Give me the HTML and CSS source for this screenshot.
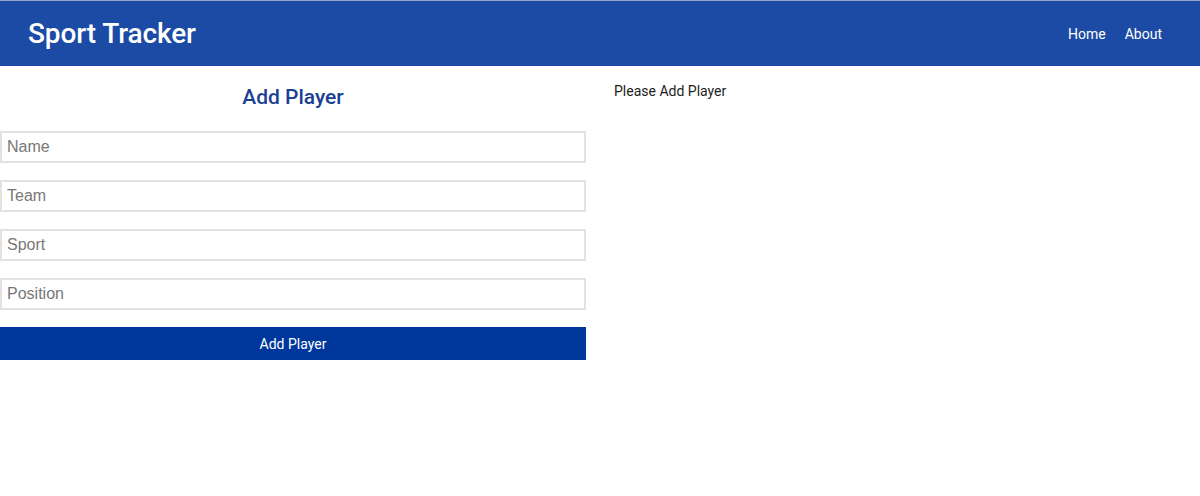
FILE: index.html
```html
<!DOCTYPE html>
<html lang="en">
<head>
<meta charset="utf-8">
<title>Sport Tracker</title>
<link rel="stylesheet" href="styles.css">
</head>
<body>
<header class="navbar">
  <h1 class="brand">Sport Tracker</h1>
  <nav class="nav">
    <a class="nav-link" href="#">Home</a>
    <a class="nav-link" href="#">About</a>
  </nav>
</header>
<main class="content">
  <section class="form-col">
    <h2 class="form-title">Add Player</h2>
    <form class="player-form">
      <input class="field" type="text" placeholder="Name">
      <input class="field" type="text" placeholder="Team">
      <input class="field" type="text" placeholder="Sport">
      <input class="field" type="text" placeholder="Position">
      <button class="submit" type="button">Add Player</button>
    </form>
  </section>
  <section class="list-col">
    <p class="empty">Please Add Player</p>
  </section>
</main>
</body>
</html>
```
FILE: styles.css
```css
* { box-sizing: border-box; }
html, body { margin: 0; padding: 0; background: #fff; }
body { font-family: Roboto, "Liberation Sans", sans-serif; color: #222; }

.navbar {
  display: flex;
  align-items: center;
  justify-content: space-between;
  height: 66px;
  padding: 0 38px 0 28px;
  background: #1c4ba5;
  border-top: 1px solid #8fa3c9;
}
.brand {
  margin: 0;
  font-size: 28px;
  font-weight: 500;
  color: #fff;
  letter-spacing: -0.1px;
}
.nav { display: flex; gap: 19px; }
.nav-link {
  color: #fff;
  text-decoration: none;
  font-size: 14px;
  font-weight: 400;
}

.content {
  display: grid;
  grid-template-columns: 586px 1fr;
}
.form-col { display: flex; flex-direction: column; }
.form-title {
  margin: 19px 0 22px;
  text-align: center;
  font-size: 21px;
  font-weight: 500;
  color: #1b3f94;
  line-height: 24px;
}
.player-form { display: flex; flex-direction: column; gap: 17px; }
.field {
  height: 32px;
  width: 100%;
  border: 2px solid #e2e2e2;
  padding: 0 5px;
  font-family: "Liberation Sans", Arial, sans-serif;
  font-size: 16px;
  color: #333;
  outline: none;
}
.field::placeholder { color: #777; }
.submit {
  height: 33px;
  width: 100%;
  border: none;
  background: #00379c;
  color: #fff;
  font-family: Roboto, "Liberation Sans", sans-serif;
  font-size: 14px;
}
.list-col { padding: 17px 0 0 28px; }
.empty {
  margin: 0;
  font-size: 14px;
  font-weight: 400;
  color: #1e1e1e;
  line-height: 17px;
}
```
